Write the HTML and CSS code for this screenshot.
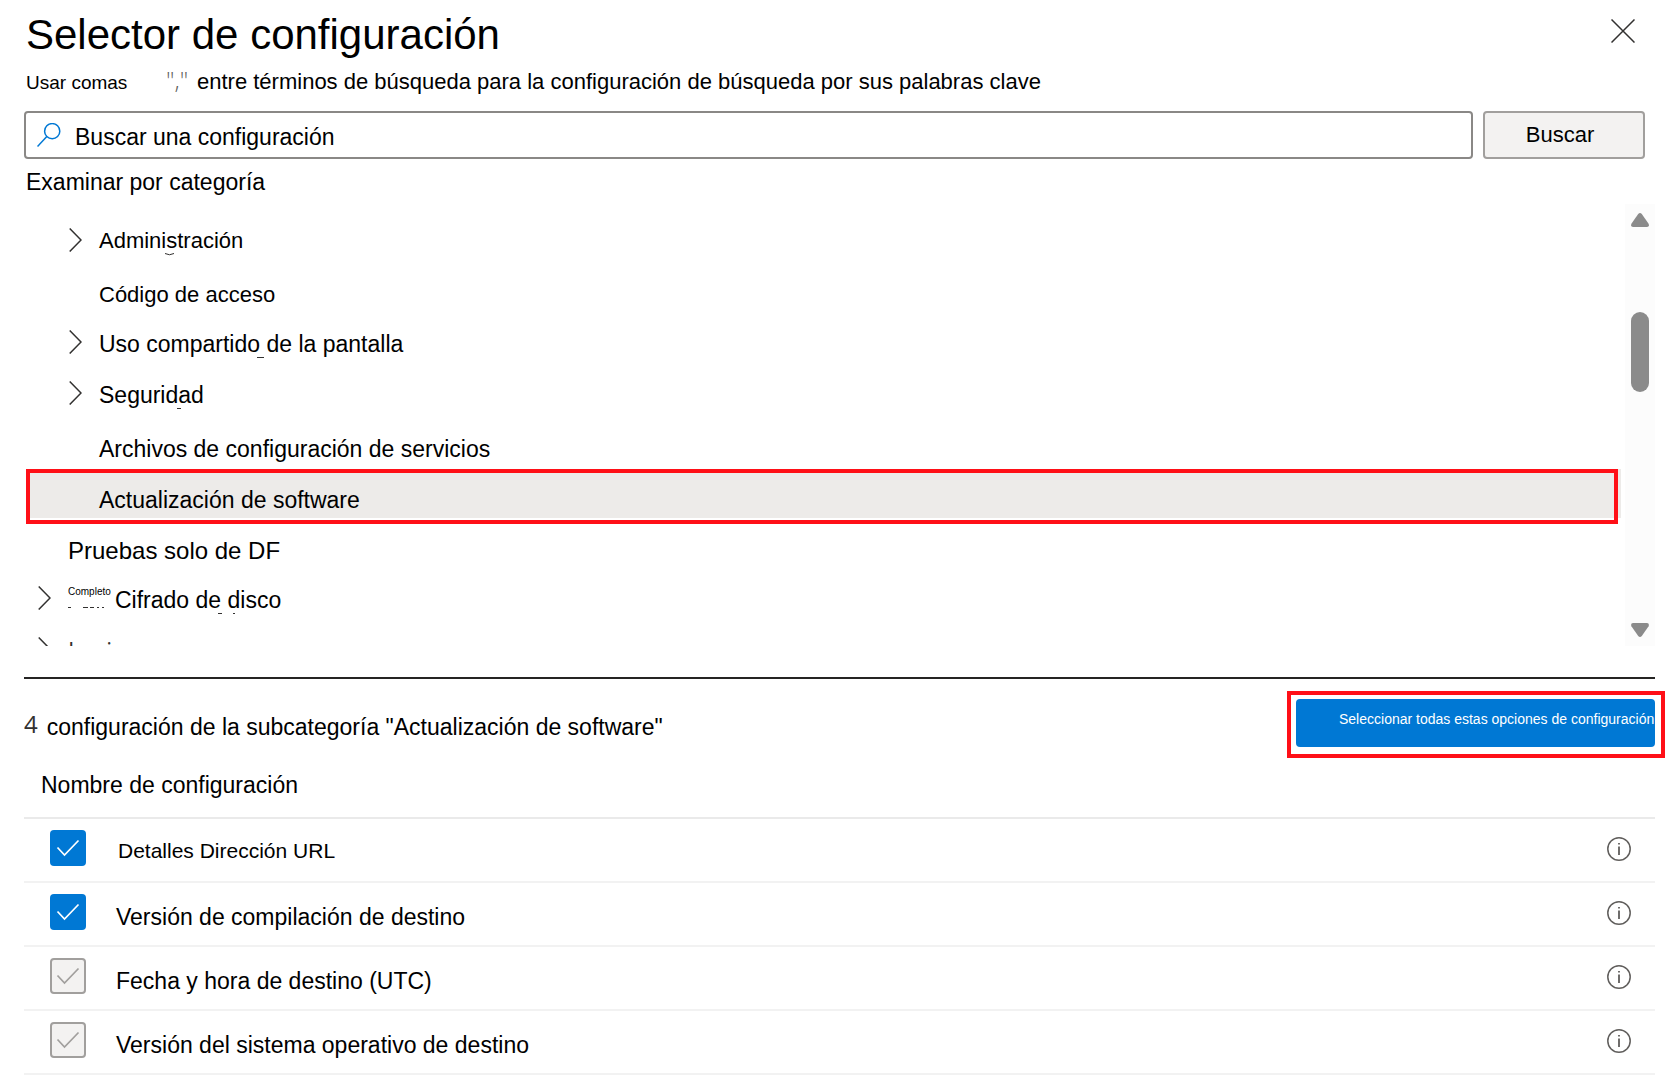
FILE: index.html
```html
<!DOCTYPE html>
<html lang="es">
<head>
<meta charset="utf-8">
<meta name="viewport" content="width=device-width, initial-scale=1">
<title>Selector de configuración</title>
<link rel="stylesheet" href="styles.css">
</head>
<body>
<main class="panel">
  <header class="panel-header">
    <h1 class="title">Selector de configuración</h1>
    <button class="icon-button close" type="button" aria-label="Cerrar">
      <svg width="24" height="24" viewBox="0 0 24 24" fill="none" stroke="#323130" stroke-width="1.5"><path d="M0.5 0.5 23.5 23.5M23.5 0.5 0.5 23.5"/></svg>
    </button>
  </header>

  <p class="hint"><span class="hint-lead">Usar comas</span><span class="hint-comma">","</span><span>entre términos de búsqueda para la configuración de búsqueda por sus palabras clave</span></p>

  <form class="search">
    <label class="search-box">
      <svg class="search-icon" width="24" height="24" viewBox="0 0 24 24" fill="none" stroke="#0078d4" stroke-width="1.5"><circle cx="15.2" cy="8.2" r="7.6"/><path d="M9.8 13.6 0.5 23.5"/></svg>
      <input class="search-input" type="text" placeholder="Buscar una configuración" aria-label="Buscar una configuración">
    </label>
    <button class="search-button" type="button">Buscar</button>
  </form>

  <h2 class="browse">Examinar por categoría</h2>

  <section class="browser">
    <ul class="tree">
      <li class="node child">
        <svg class="chevron" width="13" height="24" viewBox="0 0 13 24"><path d="M0.7 0.5 12 12 0.7 23.5"/></svg>
        <span>Administración</span>
        <svg class="marks" width="300" height="51" viewBox="0 0 300 51"><path d="M139 39.5Q143.500 42 148 39.500"/></svg>
      </li>
      <li class="node child leaf"><span>Código de acceso</span></li>
      <li class="node child wide">
        <svg class="chevron" width="13" height="24" viewBox="0 0 13 24"><path d="M0.7 0.5 12 12 0.7 23.5"/></svg>
        <span>Uso compartido de la pantalla</span>
        <svg class="marks" width="300" height="51" viewBox="0 0 300 51"><path d="M231 41.500H238"/></svg>
      </li>
      <li class="node child wide">
        <svg class="chevron" width="13" height="24" viewBox="0 0 13 24"><path d="M0.7 0.5 12 12 0.7 23.5"/></svg>
        <span>Seguridad</span>
        <svg class="marks" width="300" height="51" viewBox="0 0 300 51"><path d="M151 41.500H155"/></svg>
      </li>
      <li class="node child leaf wide"><span>Archivos de configuración de servicios</span></li>
      <li class="node child leaf wide selected"><span>Actualización de software</span></li>
      <li class="node leaf large"><span>Pruebas solo de DF</span></li>
      <li class="node wide">
        <svg class="chevron" width="13" height="24" viewBox="0 0 13 24"><path d="M0.7 0.5 12 12 0.7 23.5"/></svg>
        <span class="prefix">Completo</span><span>Cifrado de disco</span>
        <svg class="marks" width="300" height="51" viewBox="0 0 300 51"><path d="M42 35.500H45M57 35.500H62M64 35.500H68M71 35.500H73M76 35.500H78M192 41.500H196M207 41.500H209"/></svg>
      </li>
      <li class="node cut">
        <svg class="chevron" width="13" height="24" viewBox="0 0 13 24"><path d="M0.7 0.5 12 12 0.7 23.5"/></svg>
        <span>Login</span>
      </li>
    </ul>
    <div class="scrollbar">
      <button class="icon-button" type="button" aria-label="Subir"><svg width="18" height="14" viewBox="0 0 18 14"><path d="M7.200 1Q9-0.900 10.800 1L17.600 10.800Q18.600 13.800 16 14H2Q-0.600 13.800 0.400 10.800Z" fill="#8b8b8b"/></svg></button>
      <div class="thumb"></div>
      <button class="icon-button" type="button" aria-label="Bajar"><svg width="18" height="14" viewBox="0 0 18 14"><path d="M7.200 13Q9 14.900 10.800 13L17.600 3.200Q18.600 0.200 16 0H2Q-0.600 0.200 0.400 3.200Z" fill="#8b8b8b"/></svg></button>
    </div>
  </section>

  <section class="results">
    <div class="results-bar">
      <h2 class="results-title"><span class="count">4</span><span>configuración de la subcategoría "Actualización de software"</span></h2>
      <div class="callout"><button class="select-all" type="button">Seleccionar todas estas opciones de configuración</button></div>
    </div>

    <table class="settings">
      <thead><tr><th colspan="3" scope="col">Nombre de configuración</th></tr></thead>
      <tbody>
        <tr>
          <td class="cell-check"><span class="check"><input type="checkbox" id="s1" checked><svg width="36" height="36" viewBox="0 0 36 36"><path d="M7.500 17.500 14.500 25 28.500 10.500"/></svg></span></td>
          <td class="cell-name small"><label for="s1">Detalles Dirección URL</label></td>
          <td class="cell-info"><button class="icon-button" type="button" aria-label="Información"><svg width="24" height="24" viewBox="0 0 24 24"><circle cx="12" cy="12" r="11.200" fill="none" stroke="#605e5c" stroke-width="1.500"/><path d="M11.100 6h1.800v1.600h-1.800zM11.100 9.500h1.800v8.500h-1.800z" fill="#605e5c"/></svg></button></td>
        </tr>
        <tr>
          <td class="cell-check"><span class="check"><input type="checkbox" id="s2" checked><svg width="36" height="36" viewBox="0 0 36 36"><path d="M7.500 17.500 14.500 25 28.500 10.500"/></svg></span></td>
          <td class="cell-name"><label for="s2">Versión de compilación de destino</label></td>
          <td class="cell-info"><button class="icon-button" type="button" aria-label="Información"><svg width="24" height="24" viewBox="0 0 24 24"><circle cx="12" cy="12" r="11.200" fill="none" stroke="#605e5c" stroke-width="1.500"/><path d="M11.100 6h1.800v1.600h-1.800zM11.100 9.500h1.800v8.500h-1.800z" fill="#605e5c"/></svg></button></td>
        </tr>
        <tr>
          <td class="cell-check"><span class="check"><input type="checkbox" id="s3" checked disabled><svg width="36" height="36" viewBox="0 0 36 36"><path d="M7.500 17.500 14.500 25 28.500 10.500"/></svg></span></td>
          <td class="cell-name"><label for="s3">Fecha y hora de destino (UTC)</label></td>
          <td class="cell-info"><button class="icon-button" type="button" aria-label="Información"><svg width="24" height="24" viewBox="0 0 24 24"><circle cx="12" cy="12" r="11.200" fill="none" stroke="#605e5c" stroke-width="1.500"/><path d="M11.100 6h1.800v1.600h-1.800zM11.100 9.500h1.800v8.500h-1.800z" fill="#605e5c"/></svg></button></td>
        </tr>
        <tr>
          <td class="cell-check"><span class="check"><input type="checkbox" id="s4" checked disabled><svg width="36" height="36" viewBox="0 0 36 36"><path d="M7.500 17.500 14.500 25 28.500 10.500"/></svg></span></td>
          <td class="cell-name"><label for="s4">Versión del sistema operativo de destino</label></td>
          <td class="cell-info"><button class="icon-button" type="button" aria-label="Información"><svg width="24" height="24" viewBox="0 0 24 24"><circle cx="12" cy="12" r="11.200" fill="none" stroke="#605e5c" stroke-width="1.500"/><path d="M11.100 6h1.800v1.600h-1.800zM11.100 9.500h1.800v8.500h-1.800z" fill="#605e5c"/></svg></button></td>
        </tr>
      </tbody>
    </table>
  </section>
</main>
</body>
</html>
```
FILE: styles.css
```css
* {
  box-sizing: border-box;
}

body {
  margin: 0;
  background: #fff;
  color: #000;
  font: 23px/28px "Liberation Sans", Arial, sans-serif;
}

button,
input {
  font-family: inherit;
  color: inherit;
}

h1,
h2,
p,
ul {
  margin: 0;
  padding: 0;
  font-weight: 400;
}

svg {
  display: block;
}

.panel {
  padding: 11px 21px 0 24px;
}

.icon-button {
  display: block;
  padding: 0;
  border: 0;
  background: none;
}

.panel-header {
  display: flex;
  justify-content: space-between;
  padding: 0 20px 0 2px;
}

.title {
  font-size: 42px;
  line-height: 48px;
}

.close {
  align-self: flex-start;
  margin-top: 8px;
}

.hint {
  display: flex;
  align-items: baseline;
  height: 28px;
  margin-top: 9px;
  padding-left: 2px;
  font-size: 22px;
}

.hint-lead {
  width: 140px;
  font-size: 19px;
}

.hint-comma {
  width: 31px;
  color: #605e5c;
  font-family: "Open Sans", sans-serif;
  font-size: 24px;
  font-weight: 300;
  line-height: 20px;
}

.search {
  display: flex;
  gap: 10px;
  margin-top: 15px;
  padding-right: 10px;
}

.search-box {
  display: flex;
  flex: 1;
  align-items: center;
  gap: 14px;
  height: 48px;
  padding-left: 11px;
  border: 2px solid #8a8886;
  border-radius: 4px;
}

.search-input {
  flex: 1;
  min-width: 0;
  height: 44px;
  padding: 4px 0 0;
  border: 0;
  outline: 0;
  background: none;
  font-size: 23px;
}

.search-input::placeholder {
  color: #000;
  opacity: 1;
}

.search-button {
  width: 162px;
  height: 48px;
  padding: 0 8px 0 0;
  border: 2px solid #a19f9d;
  border-radius: 4px;
  background: #f3f2f1;
  font-size: 22px;
}

.browse {
  margin-top: 9px;
  padding-left: 2px;
  font-size: 23px;
}

.browser {
  display: flex;
  gap: 4px;
  height: 442px;
  margin-top: 8px;
}

.tree {
  flex: 1;
  overflow: hidden;
  padding: 10px 0 0 2px;
  list-style: none;
}

.node {
  position: relative;
  display: flex;
  align-items: center;
  height: 51px;
  padding-left: 42px;
  font-size: 22px;
}

.node.child {
  padding-left: 73px;
}

.node.wide {
  font-size: 23px;
}

.node.large {
  font-size: 24px;
}

.node > span {
  padding-top: 2px;
}

.node.wide > span {
  padding-top: 4px;
}

.node.leaf > span {
  padding-top: 8px;
}

.node.leaf.wide > span {
  padding-top: 10px;
}

.chevron {
  margin-left: -30px;
  margin-right: 17px;
  fill: none;
  stroke: #323130;
  stroke-width: 1.5;
}

.marks {
  position: absolute;
  top: 0;
  left: 0;
  fill: none;
  stroke: #323130;
  stroke-width: 1;
}

.node.wide > .prefix {
  align-self: flex-start;
  width: 47px;
  padding-top: 6px;
  font-size: 10px;
}

.node.cut > span {
  color: #323130;
  font-family: "Open Sans", sans-serif;
  font-size: 23px;
}

.node.selected {
  height: 52px;
  background: #edebe9 linear-gradient(#fff, #fff) bottom / 100% 3px no-repeat;
}

.selected::after {
  content: "";
  position: absolute;
  inset: 0 3px -3px 0;
  border: 4px solid #ff0f17;
}

.scrollbar {
  display: flex;
  flex-direction: column;
  align-items: center;
  width: 30px;
  padding: 9px 0;
  background: #fcfcfc;
}

.thumb {
  width: 18px;
  height: 80px;
  margin-top: 85px;
  margin-bottom: auto;
  border-radius: 9px;
  background: #8b8b8b;
}

.results {
  margin-top: 31px;
  border-top: 2px solid #252423;
}

.results-bar {
  display: flex;
  justify-content: space-between;
  align-items: flex-start;
  padding-top: 20px;
}

.results-title {
  display: flex;
  gap: 9px;
  padding-top: 14px;
  font-size: 23px;
}

.count {
  color: #323130;
  font-family: "Open Sans", sans-serif;
  font-size: 24px;
  font-weight: 500;
  line-height: 22px;
}

.callout {
  position: relative;
  flex: none;
}

.callout::after {
  content: "";
  position: absolute;
  inset: -8px -10px -11px -9px;
  border: 4px solid #ff0f17;
  pointer-events: none;
}

.select-all {
  display: block;
  width: 359px;
  height: 48px;
  padding: 0 0 8px 43px;
  overflow: hidden;
  border: 0;
  border-radius: 4px;
  background: #0078d4;
  color: #fff;
  font-size: 14px;
  text-align: left;
  white-space: nowrap;
}

.settings {
  width: 100%;
  border-spacing: 0;
}

.settings th {
  padding: 24px 0 18px 17px;
  border-bottom: 2px solid #eaeaea;
  font-weight: 400;
  text-align: left;
}

.settings td {
  height: 64px;
  padding: 0;
  border-bottom: 2px solid #f2f2f2;
  vertical-align: top;
}

.settings .cell-check {
  width: 92px;
  padding: 11px 0 0 26px;
}

.check {
  display: grid;
  width: 36px;
  height: 36px;
}

.check > * {
  grid-area: 1 / 1;
}

.check input {
  appearance: none;
  width: 36px;
  height: 36px;
  margin: 0;
  border-radius: 4px;
  background: #0078d4;
}

.check input:disabled {
  border: 2px solid #a19f9d;
  background: #f3f2f1;
}

.check svg {
  fill: none;
  stroke: #fff;
  stroke-width: 1.7;
  pointer-events: none;
}

.check input:disabled + svg {
  stroke: #a19f9d;
}

.settings .cell-name {
  padding-top: 20px;
}

.settings .small {
  padding: 18px 0 0 2px;
  font-size: 21px;
}

.settings .cell-info {
  width: 48px;
  padding-top: 18px;
}
```
